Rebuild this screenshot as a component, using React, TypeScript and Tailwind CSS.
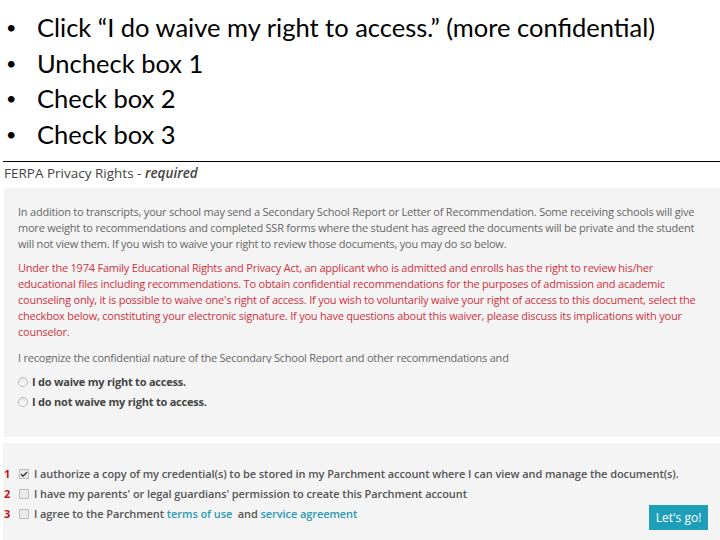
import { Check } from 'lucide-react';

const sans = "font-['Open_Sans',sans-serif]";

function Radio({ label }: { label: string }) {
  return (
    <div className="flex items-center h-[20px]">
      <span className="w-[10px] h-[10px] rounded-full border border-[#b8b8b8] bg-gradient-to-b from-[#e6e6e6] to-[#fdfdfd] mr-[4px]" />
      <span className="font-bold text-[#444]">{label}</span>
    </div>
  );
}

function Box({ n, checked, children }: { n: string; checked?: boolean; children: React.ReactNode }) {
  return (
    <div className="flex items-center h-[20px]">
      <span className="w-[15px] text-[#c0151b] font-bold text-[11px]">{n}</span>
      <span className="w-[10px] h-[10px] border border-[#bdbdbd] bg-[#e9e9e9] flex items-center justify-center mr-[5px]">
        {checked && <Check size={9} strokeWidth={4} className="text-[#333]" />}
      </span>
      <span className="font-semibold text-[#555] tracking-[-0.08px]">{children}</span>
    </div>
  );
}

export default function App() {
  return (
    <div className="w-[720px] h-[540px] bg-white overflow-hidden relative">
      {/* Slide bullets */}
      <ul className="pt-[10px] font-['Lato',sans-serif] text-[25.5px] leading-[35.5px] text-black">
        {[
          'Click “I do waive my right to access.” (more confidential)',
          'Uncheck box 1',
          'Check box 2',
          'Check box 3',
        ].map((t) => (
          <li key={t} className="flex">
            <span className="w-[37px] pl-[6px] text-[18px]">•</span>
            <span>{t}</span>
          </li>
        ))}
      </ul>

      <div className={`mt-[9px] ml-[3px] border-t-[1.5px] border-black ${sans}`}>
        <div className="pl-[1px] h-[26px] pt-[1px] leading-[20px] text-[13.5px] text-[#444]">
          FERPA Privacy Rights -&nbsp;<i className="font-semibold">required</i>
        </div>

        {/* Waiver panel */}
        <div className="ml-[1px] bg-[#f4f4f4] h-[249px] pt-[16px] pl-[14px] text-[11px] leading-[16px] tracking-[-0.22px] whitespace-nowrap overflow-hidden">
          <p className="text-[#666]">
            In addition to transcripts, your school may send a Secondary School Report or Letter of Recommendation. Some receiving schools will give<br />
            more weight to recommendations and completed SSR forms where the student has agreed the documents will be private and the student<br />
            will not view them. If you wish to waive your right to review those documents, you may do so below.
          </p>
          <p className="mt-[8px] text-[#d0323d]">
            Under the 1974 Family Educational Rights and Privacy Act, an applicant who is admitted and enrolls has the right to review his/her<br />
            educational files including recommendations. To obtain confidential recommendations for the purposes of admission and academic<br />
            counseling only, it is possible to waive one's right of access. If you wish to voluntarily waive your right of access to this document, select the<br />
            checkbox below, constituting your electronic signature. If you have questions about this waiver, please discuss its implications with your<br />
            counselor.
          </p>
          <div className="mt-[11px] h-[12px] overflow-hidden text-[#666]">
            <p className="-mt-[1px]">I recognize the confidential nature of the Secondary School Report and other recommendations and</p>
          </div>
          <div className="mt-[9px]">
            <Radio label="I do waive my right to access." />
            <Radio label="I do not waive my right to access." />
          </div>
        </div>

        {/* Account panel */}
        <div className="mt-[6px] bg-[#f4f4f4] h-[100px] pt-[21px] pl-[1px] pr-[12px] text-[11px] whitespace-nowrap relative">
          <Box n="1" checked>
            I authorize a copy of my credential(s) to be stored in my Parchment account where I can view and manage the document(s).
          </Box>
          <Box n="2">I have my parents' or legal guardians' permission to create this Parchment account</Box>
          <Box n="3">
            I agree to the Parchment <span className="text-[#2a9bb5]">terms of use</span>&nbsp; and <span className="text-[#2a9bb5]">service agreement</span>
          </Box>
          <button className="absolute right-[12px] bottom-[13px] w-[59px] h-[25px] bg-[#1e9fb9] text-white text-[12px]">
            Let's go!
          </button>
        </div>
      </div>
    </div>
  );
}
